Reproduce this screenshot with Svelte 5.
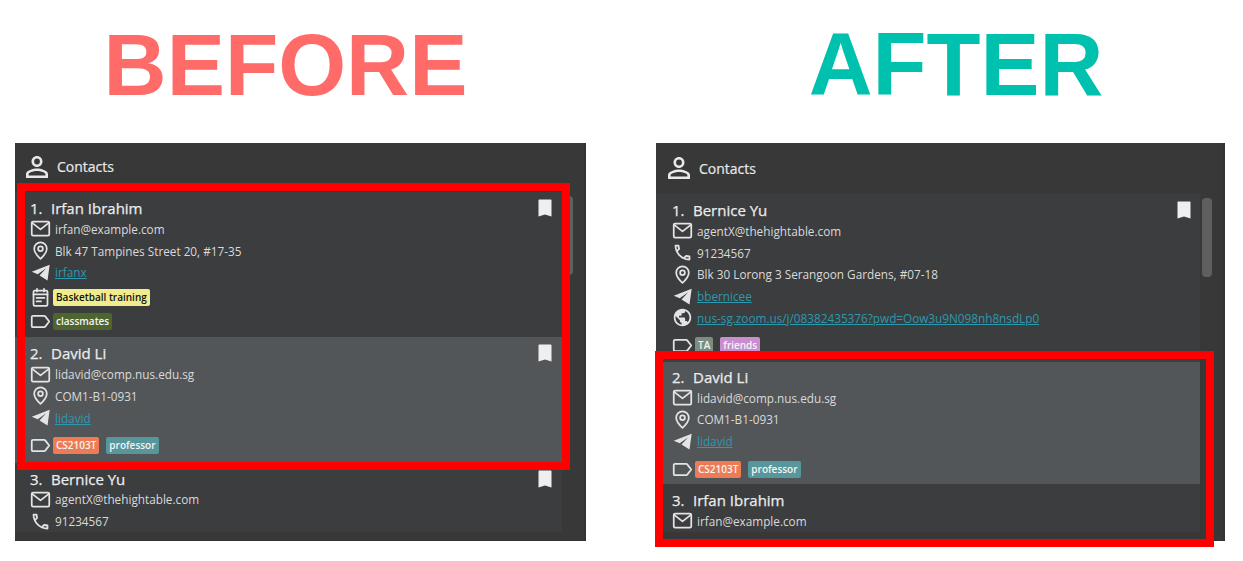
<script>
	const irfan = {
		name: 'Irfan Ibrahim',
		email: 'irfan@example.com',
		address: 'Blk 47 Tampines Street 20, #17-35',
		telegram: 'irfanx',
		event: 'Basketball training',
		tags: [{ label: 'classmates', color: '#4f6530' }]
	};
	const david = {
		name: 'David Li',
		email: 'lidavid@comp.nus.edu.sg',
		address: 'COM1-B1-0931',
		telegram: 'lidavid',
		tags: [
			{ label: 'CS2103T', color: '#ee7b53' },
			{ label: 'professor', color: '#57969a' }
		],
		selected: true
	};
	const bernice = {
		name: 'Bernice Yu',
		email: 'agentX@thehightable.com',
		phone: '91234567',
		address: 'Blk 30 Lorong 3 Serangoon Gardens, #07-18',
		telegram: 'bbernicee',
		link: 'nus-sg.zoom.us/j/08382435376?pwd=Oow3u9N098nh8nsdLp0',
		tags: [
			{ label: 'TA', color: '#7b8c82' },
			{ label: 'friends', color: '#c98dd0' }
		]
	};

	const panels = [
		{
			id: 'before',
			title: 'BEFORE',
			contacts: [
				{ ...irfan, pinned: true },
				{ ...david, pinned: true },
				{ ...bernice, pinned: true }
			]
		},
		{
			id: 'after',
			title: 'AFTER',
			contacts: [{ ...bernice, pinned: true }, david, irfan]
		}
	];
</script>

{#snippet icon(name)}
	<svg class="icon" viewBox="0 0 24 24" aria-hidden="true">
		{#if name === 'mail'}
			<rect x="2" y="4" width="20" height="16" rx="1.5" class="line" />
			<path d="M2.500 5.500l9.500 7.500 9.500-7.500" class="line" />
		{:else if name === 'phone'}
			<path class="fill" d="M6.54 5c.06.89.21 1.76.45 2.59l-1.2 1.2c-.41-1.2-.67-2.47-.76-3.79h1.51m9.86 12.02c.85.24 1.72.39 2.6.45v1.49c-1.32-.09-2.59-.35-3.8-.75l1.2-1.19M7.5 3H4c-.55 0-1 .45-1 1 0 9.39 7.61 17 17 17 .55 0 1-.45 1-1v-3.49c0-.55-.45-1-1-1-1.24 0-2.45-.2-3.57-.57-.1-.04-.21-.05-.31-.05-.26 0-.51.1-.71.29l-2.2 2.2c-2.83-1.45-5.15-3.76-6.59-6.59l2.2-2.2c.28-.28.36-.67.25-1.02C8.7 6.45 8.5 5.25 8.5 4c0-.55-.45-1-1-1z" />
		{:else if name === 'pin'}
			<path class="line" d="M12 21.500C7 17 4.800 13.600 4.800 10 4.800 5.800 8.200 2.600 12 2.600s7.200 3.200 7.200 7.400c0 3.600-2.200 7-7.200 11.500z" />
			<circle class="line" cx="12" cy="10" r="2.700" />
		{:else if name === 'telegram'}
			<path class="fill" d="M22.500 3L2 11.200l6.800 2.900L18.500 7l-7.600 8.400L20 21z" />
		{:else if name === 'globe'}
			<path class="fill" d="M12 2C6.48 2 2 6.48 2 12s4.48 10 10 10 10-4.48 10-10S17.52 2 12 2zm-1 17.93c-3.95-.49-7-3.85-7-7.93 0-.62.08-1.21.21-1.79L9 15v1c0 1.1.9 2 2 2v1.93zm6.9-2.54c-.26-.81-1-1.39-1.9-1.39h-1v-3c0-.55-.45-1-1-1H8v-2h2c.55 0 1-.45 1-1V7h2c1.1 0 2-.9 2-2v-.41c2.93 1.19 5 4.06 5 7.41 0 2.08-.8 3.97-2.1 5.39z" />
		{:else if name === 'calendar'}
			<rect x="4" y="4" width="16" height="17.500" rx="1.500" class="line" />
			<path class="line" d="M4 8.500h16M8 2v3M16 2v3M7.500 12.500h9M7.500 16.500h5" />
		{:else if name === 'label'}
			<path class="line" d="M3.500 5.500c-.8 0-1.500.7-1.500 1.500v10c0 .8.7 1.500 1.500 1.500h12.700c.5 0 1-.2 1.200-.6L22 12l-4.600-5.900c-.3-.4-.7-.6-1.200-.6z" />
		{/if}
	</svg>
{/snippet}

{#snippet card(c, index)}
	<article class="card" class:selected={c.selected}>
		<div class="name-row">
			<span class="name"><span class="index">{index + 1}.</span>{c.name}</span>
			{#if c.pinned}
				<svg class="bookmark" viewBox="0 0 14 18" aria-hidden="true">
					<path d="M1.500 .5h11c.6 0 1 .4 1 1v16l-6.500-2-6.500 2v-16c0-.6.4-1 1-1z" />
				</svg>
			{/if}
		</div>
		<div class="row">{@render icon('mail')}<span>{c.email}</span></div>
		{#if c.phone}
			<div class="row">{@render icon('phone')}<span>{c.phone}</span></div>
		{/if}
		<div class="row">{@render icon('pin')}<span>{c.address}</span></div>
		<div class="row">{@render icon('telegram')}<span class="link">{c.telegram}</span></div>
		{#if c.link}
			<div class="row">{@render icon('globe')}<span class="link">{c.link}</span></div>
		{/if}
		{#if c.event}
			<div class="row tags event">
				{@render icon('calendar')}
				<span class="tag yellow">{c.event}</span>
			</div>
		{/if}
		<div class="row tags" class:spaced={!c.event}>
			{@render icon('label')}
			{#each c.tags as t}
				<span class="tag" style="background: {t.color}">{t.label}</span>
			{/each}
		</div>
	</article>
{/snippet}

<main class="page">
	{#each panels as p}
		<section class="column {p.id}">
			<h1>{p.title}</h1>
			<div class="panel">
				<header>
					<svg class="person" viewBox="4 4 16 16" aria-hidden="true">
						<path d="M12 5.900a2.100 2.100 0 1 1 0 4.200 2.100 2.100 0 0 1 0-4.200m0 9c2.970 0 6.100 1.460 6.100 2.100v1.100H5.900V17c0-.640 3.130-2.100 6.100-2.100M12 4C9.790 4 8 5.790 8 8s1.790 4 4 4 4-1.790 4-4-1.790-4-4-4zm0 9c-2.670 0-8 1.340-8 4v3h16v-3c0-2.660-5.330-4-8-4z" />
					</svg>
					<span>Contacts</span>
				</header>
				<div class="body">
					<div class="list">
						{#each p.contacts as c, i}
							{@render card(c, i)}
						{/each}
					</div>
					<div class="track"><div class="thumb"></div></div>
				</div>
				<div class="highlight"></div>
			</div>
		</section>
	{/each}
</main>

<style>
	:global(body) {
		background: #fff;
		font-family: 'Open Sans', sans-serif;
	}

	.page {
		display: flex;
		gap: 70px;
		padding-left: 15px;
		height: 561px;
		box-sizing: border-box;
		overflow: hidden;
	}

	.column {
		width: 571px;
		flex-shrink: 0;
	}

	.column.after {
		width: 569px;
	}

	h1 {
		margin: 0;
		height: 143px;
		box-sizing: border-box;
		padding-top: 15px;
		font: bold 87.300px/100px 'Liberation Sans', Arial, sans-serif;
		text-align: center;
	}

	.before h1 {
		color: #ff6b68;
		padding-right: 30px;
	}

	.after h1 {
		color: #00c1ad;
		padding-left: 31px;
		font-size: 88.400px;
	}

	.panel {
		position: relative;
		height: 398px;
		box-sizing: border-box;
		padding-bottom: 8px;
		background: #383838;
		border-right: 2px solid #333;
		border-bottom: 1px solid #333;
		display: flex;
		flex-direction: column;
	}

	header {
		height: 49px;
		flex-shrink: 0;
		box-sizing: border-box;
		padding: 0 0 2px 11px;
		display: flex;
		align-items: center;
		gap: 9px;
		color: #e8e8e8;
		font-size: 14px;
		-webkit-text-stroke: 0.2px #e8e8e8;
	}

	.after header {
		height: 51px;
		padding: 0 0 1px 12px;
	}

	.person {
		width: 22px;
		height: 24px;
		fill: #e8e8e8;
	}

	.body {
		flex: 1;
		min-height: 0;
		display: flex;
	}

	.list {
		width: 547px;
		overflow: hidden;
		background: #3c3d3f;
	}

	.after .list {
		width: 544px;
		padding-top: 1px;
	}

	.card {
		padding: 6px 0 4px;
		color: #dadada;
		font-size: 11.750px;
	}

	.card.selected {
		background: #525659;
	}

	.before .card.selected {
		padding-bottom: 5px;
	}

	.after .card {
		padding: 5px 0 3px 1px;
	}

	.after .card:first-child {
		padding-bottom: 4px;
	}

	.after .card:last-child {
		padding-top: 6px;
	}

	.name-row {
		height: 20px;
		display: flex;
		align-items: center;
		justify-content: space-between;
		padding: 0 10px 0 15px;
		color: #ececec;
		font-size: 15px;
		-webkit-text-stroke: 0.25px #ececec;
	}

	.after .name-row {
		padding-right: 9px;
	}

	.index {
		display: inline-block;
		width: 21px;
	}

	.bookmark {
		width: 14px;
		height: 18px;
		fill: #efefef;
	}

	.row {
		height: 21.750px;
		display: flex;
		align-items: center;
		gap: 4.500px;
		padding-left: 14.500px;
	}

	.icon {
		width: 21px;
		height: 21px;
		flex-shrink: 0;
	}

	.line {
		fill: none;
		stroke: #e4e4e4;
		stroke-width: 2;
		stroke-linejoin: round;
		stroke-linecap: round;
	}

	.fill {
		fill: #e4e4e4;
	}

	.link {
		color: #2c99ae;
		text-decoration: underline;
	}

	.tags {
		height: 24px;
		gap: 7px;
	}

	.tags .icon {
		margin-right: -4.500px;
	}

	.event {
		margin-top: 2px;
	}

	.spaced {
		margin-top: 5px;
	}

	.tag {
		height: 17px;
		padding: 0 3px;
		border-radius: 2px;
		color: #f4f4f4;
		font-size: 10px;
		font-weight: 600;
		line-height: 17px;
	}

	.tag.yellow {
		background: #f0ec8e;
		color: #111;
	}

	.track {
		flex: 1;
		padding: 4px 0 0 1px;
	}

	.after .track {
		padding-left: 2px;
	}

	.thumb {
		width: 10px;
		height: 79px;
		border-radius: 4px;
		background: #5f5f5f;
	}

	.highlight {
		position: absolute;
		box-sizing: border-box;
		border: 8px solid #f00;
		pointer-events: none;
	}

	.before .highlight {
		left: 2px;
		top: 40px;
		width: 553px;
		height: 287px;
	}

	.after .highlight {
		left: -1px;
		top: 208px;
		width: 559px;
		height: 196px;
	}
</style>
